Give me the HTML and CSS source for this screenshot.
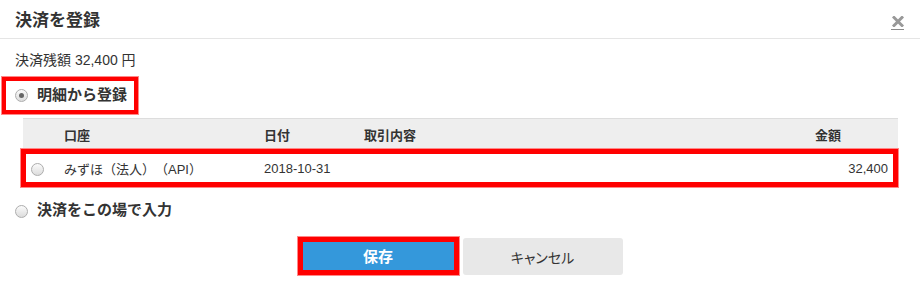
FILE: index.html
```html
<!doctype html>
<html>
<head>
<meta charset="UTF-8"/>
<link rel="stylesheet" href="styles.css">
<title>決済を登録</title>
</head>
<body>
<div class="modal">
  <div class="modal-header">
    <h1 class="title">決済を登録</h1>
    <a class="close" href="#">
      <svg width="12" height="11" viewBox="0 0 12 11">
        <path d="M2 1.5 L10 9.5 M10 1.5 L2 9.5" stroke="#999" stroke-width="3" stroke-linecap="square"/>
      </svg>
    </a>
  </div>
  <div class="modal-body">
    <div class="summary">決済残額 32,400 円</div>

    <label class="option mark">
      <span class="radio checked"></span>
      <span class="option-label">明細から登録</span>
    </label>

    <div class="list">
      <div class="list-head">
        <span></span>
        <span>口座</span>
        <span>日付</span>
        <span>取引内容</span>
        <span>金額</span>
      </div>
      <div class="list-row mark">
        <span><span class="radio"></span></span>
        <span>みずほ（法人）（API）</span>
        <span>2018-10-31</span>
        <span></span>
        <span class="amount">32,400</span>
      </div>
    </div>

    <label class="option second">
      <span class="radio"></span>
      <span class="option-label">決済をこの場で入力</span>
    </label>

    <div class="actions">
      <button class="btn save mark">保存</button>
      <button class="btn cancel">キャンセル</button>
    </div>
  </div>
</div>
</body>
</html>
```

FILE: styles.css
```css
body {
  margin: 0;
  background: #fff;
  font-family: "Liberation Sans", "Noto Sans CJK JP", sans-serif;
  color: #333;
  text-spacing-trim: space-all;
}
.modal {
  width: 920px;
  height: 289px;
}
.modal-header {
  border-bottom: 1px solid #e5e5e5;
  display: flex;
  align-items: center;
  justify-content: space-between;
  padding: 3px 16px 0 15px;
  box-sizing: border-box;
  height: 39px;
}
.title {
  margin: 0;
  font-size: 17px;
  font-weight: bold;
  line-height: 20px;
}
.close {
  display: block;
  width: 13px;
  height: 14px;
  border-bottom: 1px solid #8a8a8a;
  margin-top: 4px;
}
.close svg {
  display: block;
  margin: 1px 0 0 1px;
}
.modal-body {
  padding: 11px 22px 0 15px;
}
.summary {
  font-size: 14px;
  line-height: 20px;
}
.mark {
  border: 4px solid #f00;
  box-shadow: 0 0 0 1px #f88;
}
.option {
  display: flex;
  align-items: center;
  font-size: 15px;
  font-weight: bold;
  line-height: 20px;
}
.option.mark {
  width: 119px;
  margin: 7px 0 0 -13px;
  padding: 4px 0 5px 9px;
  box-sizing: content-box;
}
.option-label {
  margin-left: 9px;
  white-space: nowrap;
}
.radio {
  display: inline-block;
  width: 11px;
  height: 11px;
  border: 1px solid #adadad;
  border-radius: 50%;
  background: linear-gradient(#fbfbfb, #dcdcdc);
  position: relative;
  flex: none;
}
.radio.checked::after {
  content: "";
  position: absolute;
  left: 3px;
  top: 3px;
  width: 5px;
  height: 5px;
  border-radius: 50%;
  background: #666;
}
.list {
  margin: 4px 0 0 8px;
  font-size: 13px;
}
.list-head {
  display: grid;
  grid-template-columns: 41px 200px 100px 451px 1fr;
  height: 31px;
  align-items: center;
  background: #eee;
  border-top: 1px solid #ddd;
  box-sizing: border-box;
  font-weight: bold;
}
.list-row {
  display: grid;
  grid-template-columns: 38px 200px 100px 451px 1fr;
  height: 38px;
  box-sizing: border-box;
  align-items: center;
  margin-left: -2px;
  border-width: 5px;
}
.list-row .radio {
  margin-left: 5px;
  margin-top: 3px;
  display: block;
}
.amount {
  text-align: right;
  padding-right: 5px;
}
.option.second {
  margin-top: 13px;
}
.option.second .radio {
  margin-top: 3px;
}
.actions {
  display: flex;
  justify-content: center;
  align-items: center;
  gap: 4px;
  margin: 16px 0 0 -15px;
  width: 920px;
}
.btn {
  font-family: "Liberation Sans", "Noto Sans CJK JP", sans-serif;
  font-size: 14px;
  cursor: pointer;
  box-sizing: border-box;
  padding: 0;
}
.save {
  width: 161px;
  height: 38px;
  border-width: 5px;
  background: #3498db;
  color: #fff;
  font-weight: bold;
  font-size: 15px;
}
.cancel {
  width: 160px;
  height: 37px;
  border: none;
  border-radius: 3px;
  background: #e8e8e8;
  color: #333;
  font-feature-settings: "palt";
  margin-top: 2px;
}
```
